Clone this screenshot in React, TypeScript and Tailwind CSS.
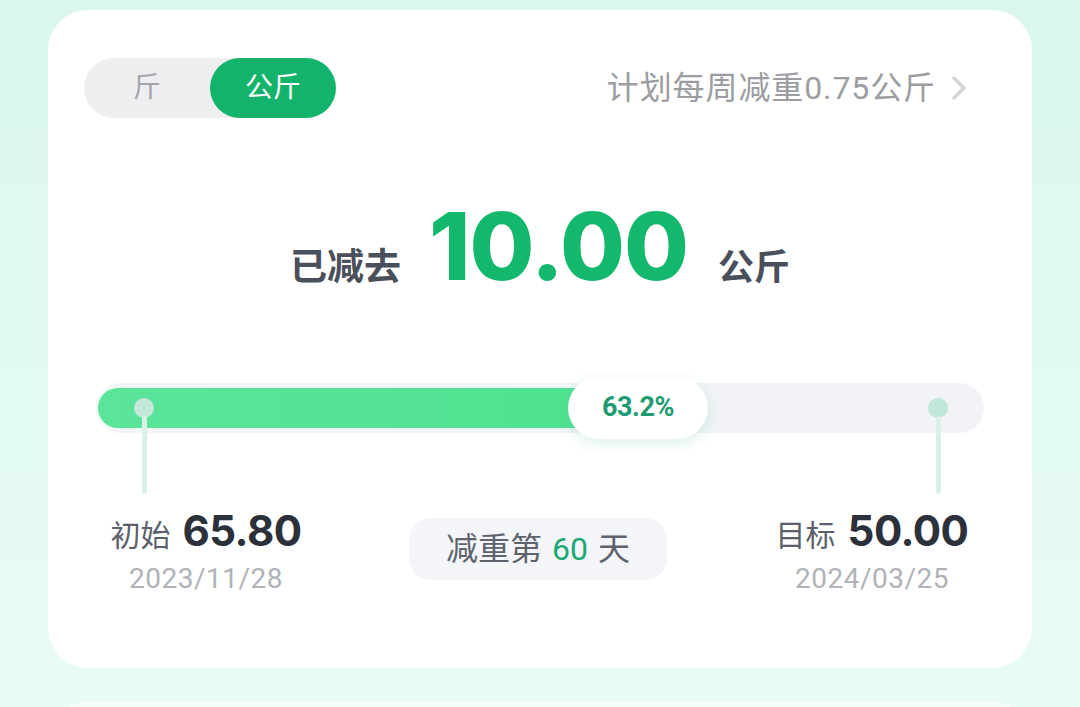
import React from "react";

const cjk = '"Roboto", "Noto Sans CJK SC", sans-serif';
const num = '"Inter", "Noto Sans CJK SC", sans-serif';

const ChevronRight: React.FC = () => (
  <svg width="18" height="28" viewBox="0 0 18 28" fill="none">
    <path d="M4 4 L14 14 L4 24" stroke="#d4d5d8" strokeWidth="3.5" strokeLinecap="round" strokeLinejoin="round" />
  </svg>
);

const UnitToggle: React.FC = () => (
  <div className="flex h-[60px] w-[252px] rounded-full bg-[#eeeef1]">
    <div className="flex w-[126px] items-center justify-center text-[28px] text-[#a4a5aa]">斤</div>
    <div className="flex w-[126px] items-center justify-center rounded-full bg-[#14b36b] text-[28px] text-white">
      公斤
    </div>
  </div>
);

const ProgressBar: React.FC<{ percent: number }> = ({ percent }) => (
  <div className="relative ml-[12px] mr-[12px] h-[50px] rounded-full bg-[#f1f3f7]">
    {/* fill, runs under the bubble */}
    <div
      className="absolute left-[2px] top-[5px] h-[40px] rounded-full bg-gradient-to-r from-[#5be49a] to-[#4fe290] ring-2 ring-[#eefaf4]"
      style={{ width: `${(percent / 100) * 815}px` }}
    />
    {/* start marker */}
    <div className="absolute left-[38px] top-[15px] flex flex-col items-center">
      <div className="h-[20px] w-[20px] rounded-full bg-[#c3e8da]" />
      <div className="-mt-[2px] h-[78px] w-[5px] rounded-full bg-[#d9f1e8]" />
    </div>
    {/* end marker */}
    <div className="absolute right-[36px] top-[15px] flex flex-col items-center">
      <div className="h-[20px] w-[20px] rounded-full bg-[#bfe6d7]" />
      <div className="-mt-[2px] h-[78px] w-[5px] rounded-full bg-[#d9f1e8]" />
    </div>
    {/* percent bubble */}
    <div
      className="absolute left-[472px] top-[-6px] flex h-[62px] w-[140px] items-center justify-center rounded-full bg-white text-[27px] font-bold tracking-[-0.5px] text-[#1f9b74] shadow-[0_4px_14px_rgba(60,180,130,0.18)]"
      style={{ fontFamily: '"Roboto", sans-serif' }}
    >
      {percent}%
    </div>
  </div>
);

const Endpoint: React.FC<{ label: string; value: string; date: string }> = ({ label, value, date }) => (
  <div className="flex flex-col items-center">
    <div className="flex items-baseline gap-[12px]">
      <span className="text-[30px] text-[#5b606b]">{label}</span>
      <span className="text-[42px] font-bold tracking-[-0.5px] text-[#2c303b]" style={{ fontFamily: num }}>
        {value}
      </span>
    </div>
    <div className="-mt-[4px] text-[28px] tracking-[0.5px] text-[#b0b2b8]">{date}</div>
  </div>
);

export default function App() {
  return (
    <div
      className="h-[707px] w-full overflow-hidden bg-gradient-to-b from-[#d9f7ec] to-[#e9fcf4] px-[48px] pt-[10px]"
      style={{ fontFamily: cjk }}
    >
      <div className="h-[658px] rounded-[40px] bg-white px-[36px] pt-[48px]">
        <div className="flex items-center justify-between">
          <UnitToggle />
          <div className="mr-[28px] flex items-center gap-[14px]">
            <span className="text-[32px] tracking-[0.9px] text-[#9c9da2]">计划每周减重0.75公斤</span>
            <ChevronRight />
          </div>
        </div>

        <div className="mt-[81px] flex items-baseline justify-center">
          <span className="text-[37px] font-bold text-[#4a4f5c]">已减去</span>
          <span
            className="ml-[28px] mr-[30px] text-[94px] font-extrabold leading-none tracking-[-1px] text-[#14b86c]"
            style={{ fontFamily: num }}
          >
            10.00
          </span>
          <span className="text-[36px] font-bold text-[#4a4f5c]">公斤</span>
        </div>

        <div className="mt-[87px]">
          <ProgressBar percent={63.2} />
        </div>

        <div className="mt-[66px] grid grid-cols-[244px_1fr_248px] items-start">
          <Endpoint label="初始" value="65.80" date="2023/11/28" />
          <div className="flex justify-center pt-[19px]">
            <div className="flex h-[62px] w-[258px] items-center justify-center rounded-[22px] bg-[#f3f5f8] text-[32px] text-[#5d626c]">
              减重第<span className="mx-[10px] text-[#1aa874]">60</span>天
            </div>
          </div>
          <Endpoint label="目标" value="50.00" date="2024/03/25" />
        </div>
      </div>
      <div className="mt-[34px] h-[40px] rounded-t-[40px] bg-[#f4fdf9]" />
    </div>
  );
}
